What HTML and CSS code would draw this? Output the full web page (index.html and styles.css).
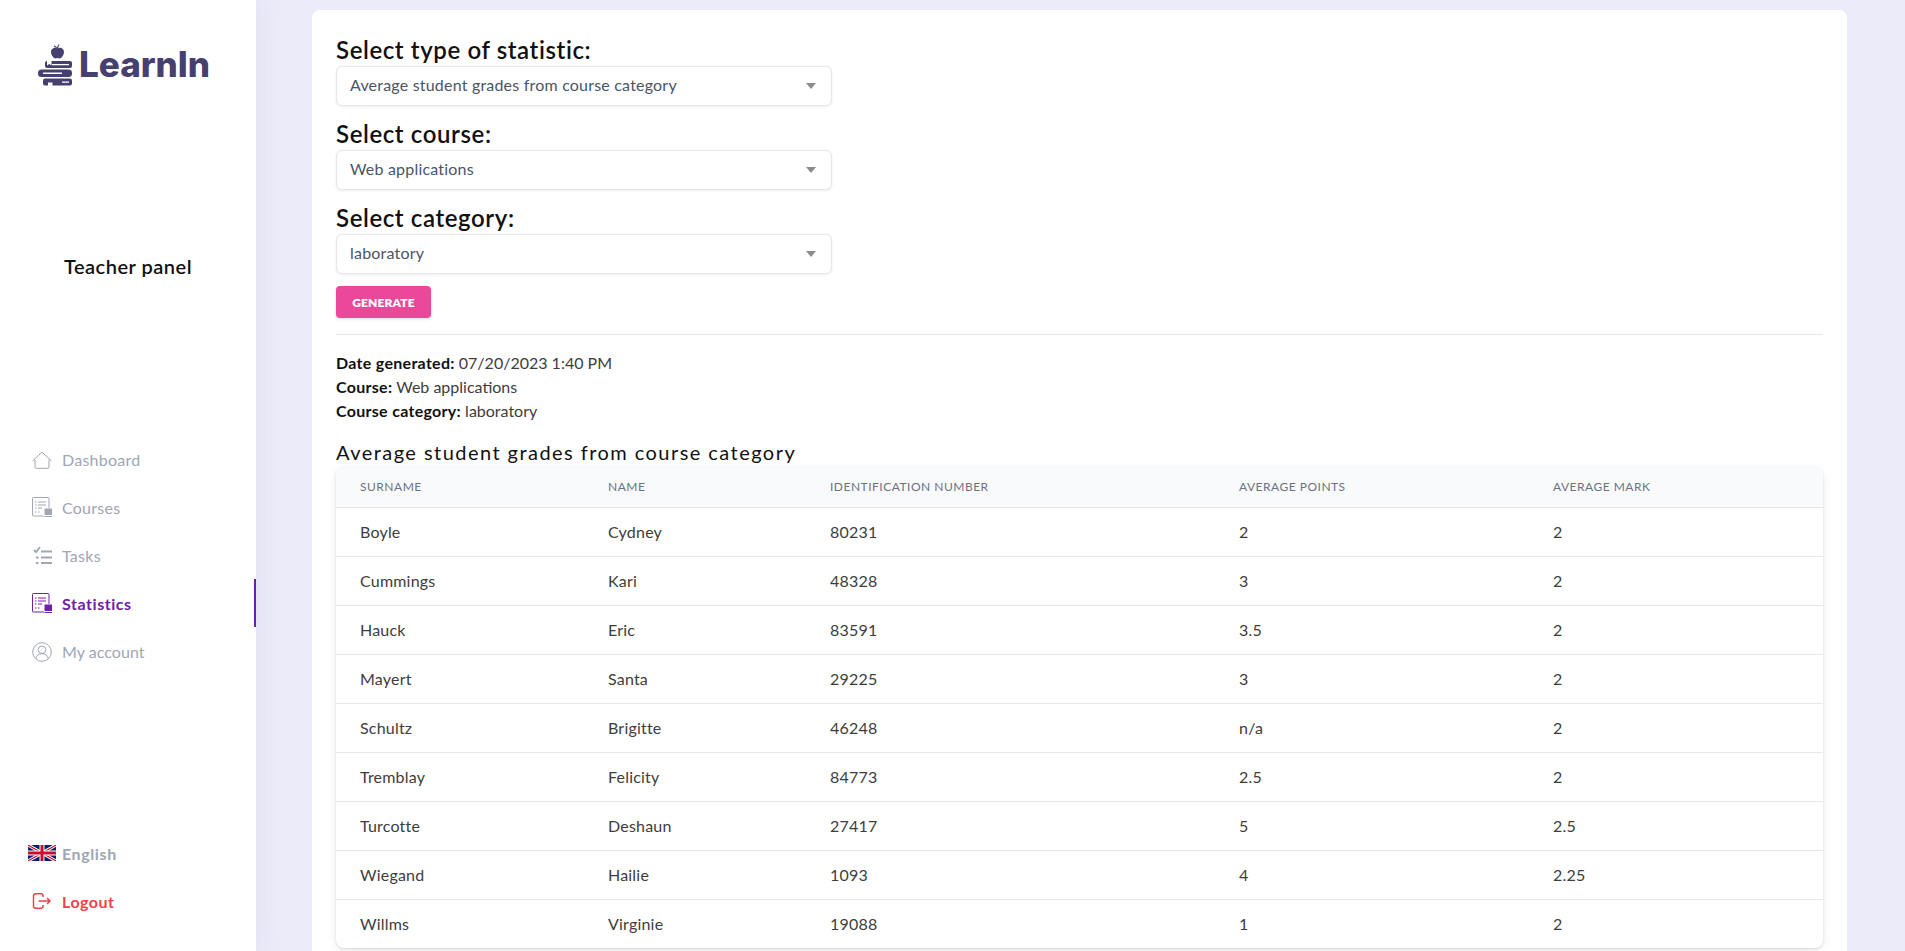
FILE: index.html
```html
<!DOCTYPE html>
<html lang="en">
<head>
<meta charset="utf-8">
<title>LearnIn - Statistics</title>
<link rel="stylesheet" href="styles.css">
</head>
<body>
<div class="app">
  <aside class="sidebar">
    <div class="logo">
      <svg class="logo-mark" viewBox="0 0 34 43" aria-hidden="true">
        <path fill="#45406f" d="M19.500 4.500c-1.300-.8-3-.9-4.300-.2-2 1-2.600 3.200-2 5.200.5 2 1.900 4.700 4 4.900 1 .1 1.600-.4 2.300-.4s1.300.5 2.300.4c2.100-.2 3.500-2.900 4-4.900.6-2-.1-4.200-2-5.200-1.300-.7-3-.6-4.300.2z"/>
        <path fill="none" stroke="#45406f" stroke-width="1.200" d="M19.500 5c0-1.500.4-3 1.600-4.500M19 4.500c-.7-1.300-1.700-2.300-3-2.800"/>
        <rect fill="#45406f" x="7" y="17" width="27" height="7" rx="2"/>
        <rect fill="#45406f" x="0" y="25.500" width="34" height="7.500" rx="3.500"/>
        <rect fill="#45406f" x="5" y="34.500" width="29" height="7" rx="2"/>
        <path fill="#fff" d="M14 20h17v1.300H14zM5 28.600h19v1.300H5zM24 37.500h7v1.300h-7zM9 16.500h4.500v5l-2.200-1.400L9 21.500zM10 38.500h4.500V43l-2.200-1.300L10 43z"/>
      </svg>
      <span class="logo-text">LearnIn</span>
    </div>
    <div class="panel-title">Teacher panel</div>
    <nav class="nav">
      <a class="nav-item"><svg class="icon" viewBox="0 0 20 20" aria-hidden="true"><path class="ln" d="M.5 12 10 3.200l9.500 8.800M3 10.500v7.500a1.300 1.300 0 0 0 1.300 1.300h11.400A1.300 1.300 0 0 0 17 18v-7.500"/></svg>Dashboard</a>
      <a class="nav-item"><svg class="icon" viewBox="0 0 20 20" aria-hidden="true"><path class="ln" d="M12 19H1.300a.8.8 0 0 1-.8-.8V1.300a.8.8 0 0 1 .8-.8h14.900a.8.8 0 0 1 .8.8V11"/><path class="ln" d="M6 5h8M6 8h8M6 11h4M3 5h1.500M3 8h1.500M3 11h1.500M3 15h1.500M6 15h1.500"/><path class="fl" d="M12.500 11.500H20V18h-7.500z"/><path class="ln" d="M12.500 19.500H20"/></svg>Courses</a>
      <a class="nav-item"><svg class="icon" viewBox="0 0 20 20" aria-hidden="true"><path class="ln bold" d="m2 5 2 2 4-5M9 6.500h11M9 12.500h11M9 18h11"/><path class="ln bold" d="M4 12.500h2.500M4 18h2.500"/></svg>Tasks</a>
      <a class="nav-item active"><svg class="icon" viewBox="0 0 20 20" aria-hidden="true"><path class="ln" d="M12 19H1.300a.8.8 0 0 1-.8-.8V1.300a.8.8 0 0 1 .8-.8h14.900a.8.8 0 0 1 .8.8V11"/><path class="ln" d="M6 5h8M6 8h8M6 11h4M3 5h1.500M3 8h1.500M3 11h1.500M3 15h1.500M6 15h1.500"/><path class="fl" d="M12.500 11.500H20V18h-7.500z"/><path class="ln" d="M12.500 19.500H20"/></svg>Statistics</a>
      <a class="nav-item account"><svg class="icon icon-low" viewBox="0 0 20 20" aria-hidden="true"><circle class="ln" cx="10" cy="10" r="9.300"/><circle class="ln" cx="10" cy="7.800" r="3.800"/><path class="ln" d="M3.800 16.500c.6-3 3-4.800 6.200-4.800s5.600 1.800 6.200 4.800"/></svg>My account</a>
    </nav>
    <div class="foot">
      <a class="nav-item lang"><svg class="flag" viewBox="0 0 28 16" aria-hidden="true"><rect width="28" height="16" fill="#012169"/><path d="M0 0 28 16M28 0 0 16" stroke="#fff" stroke-width="3.200"/><path d="M0 0 28 16M28 0 0 16" stroke="#c8102e" stroke-width="1.100"/><path d="M14 0v16M0 8h28" stroke="#fff" stroke-width="5"/><path d="M14 0v16M0 8h28" stroke="#c8102e" stroke-width="3"/></svg>English</a>
      <a class="nav-item logout"><svg class="icon" viewBox="0 0 20 20" aria-hidden="true"><path class="ln thick" d="M11 6V4.800a2 2 0 0 0-2-2H3.500a2 2 0 0 0-2 2v10.400a2 2 0 0 0 2 2H9a2 2 0 0 0 2-2V14M6.500 10h11.500M15 7l3 3-3 3"/></svg>Logout</a>
    </div>
  </aside>
  <main class="main">
    <section class="card">
      <div class="field">
        <label class="field-label">Select type of statistic:</label>
        <div class="select"><span>Average student grades from course category</span><i class="caret"></i></div>
      </div>
      <div class="field">
        <label class="field-label">Select course:</label>
        <div class="select"><span>Web applications</span><i class="caret"></i></div>
      </div>
      <div class="field">
        <label class="field-label">Select category:</label>
        <div class="select"><span>laboratory</span><i class="caret"></i></div>
      </div>
      <button class="btn">GENERATE</button>
      <hr class="rule">
      <div class="meta">
        <div><b>Date generated:</b> 07/20/2023 1:40 PM</div>
        <div><b>Course:</b> Web applications</div>
        <div><b>Course category:</b> laboratory</div>
      </div>
      <h2 class="report-title">Average student grades from course category</h2>
      <div class="table-wrap">
        <table class="grades">
          <colgroup><col class="c1"><col class="c2"><col class="c3"><col class="c4"><col class="c5"></colgroup>
          <thead><tr><th>Surname</th><th>Name</th><th>Identification number</th><th>Average points</th><th>Average mark</th></tr></thead>
          <tbody>
            <tr><td>Boyle</td><td>Cydney</td><td>80231</td><td>2</td><td>2</td></tr>
            <tr><td>Cummings</td><td>Kari</td><td>48328</td><td>3</td><td>2</td></tr>
            <tr><td>Hauck</td><td>Eric</td><td>83591</td><td>3.5</td><td>2</td></tr>
            <tr><td>Mayert</td><td>Santa</td><td>29225</td><td>3</td><td>2</td></tr>
            <tr><td>Schultz</td><td>Brigitte</td><td>46248</td><td>n/a</td><td>2</td></tr>
            <tr><td>Tremblay</td><td>Felicity</td><td>84773</td><td>2.5</td><td>2</td></tr>
            <tr><td>Turcotte</td><td>Deshaun</td><td>27417</td><td>5</td><td>2.5</td></tr>
            <tr><td>Wiegand</td><td>Hailie</td><td>1093</td><td>4</td><td>2.25</td></tr>
            <tr><td>Willms</td><td>Virginie</td><td>19088</td><td>1</td><td>2</td></tr>
          </tbody>
        </table>
      </div>
    </section>
  </main>
</div>
</body>
</html>
```
FILE: styles.css
```css
* { box-sizing: border-box; }
html, body { margin: 0; height: 100%; overflow: hidden; }
body { font-family: "Lato", "Open Sans", sans-serif; background: #ebebf9; color: #1a1a1a; }
.app { display: flex; height: 951px; }
.sidebar { width: 256px; flex: none; background: #fff; display: flex; flex-direction: column; box-shadow: 0 0 30px rgba(60,60,120,.08); position: relative; }
.logo { display: flex; align-items: center; padding: 40px 0 0 38px; gap: 7px; height: 88px; }
.logo-mark { width: 34px; height: 43px; flex: none; margin-top: 2px; }
.logo-text { font-family: "Inter", "Lato", sans-serif; font-size: 35px; line-height: 44px; font-weight: 800; letter-spacing: 0; color: #45406f; }
.panel-title { margin-top: 164px; text-align: center; font-size: 20px; line-height: 28px; font-weight: 600; letter-spacing: .5px; color: #111; }
.nav { margin-top: 155px; display: flex; flex-direction: column; }
.nav-item { display: flex; align-items: center; height: 48px; padding-left: 32px; gap: 10px; font-size: 16px; letter-spacing: .25px; color: #a0a6b4; position: relative; }
.nav-item.account { letter-spacing: .05px; }
.nav-item.active { color: #6b21a8; font-weight: 700; letter-spacing: .55px; }
.nav-item.active::after { content: ""; position: absolute; right: 0; top: 0; bottom: 0; width: 2px; background: #6b21a8; }
.icon { width: 20px; height: 20px; flex: none; }
.icon-low { margin-top: 2px; }
.ln { fill: none; stroke: currentColor; stroke-width: 1; }
.ln.bold { stroke-width: 1.900; }
.ln.thick { stroke-width: 1.500; }
.fl { fill: currentColor; }
.foot { margin-top: auto; padding-bottom: 26px; display: flex; flex-direction: column; }
.lang { padding-left: 28px; gap: 6px; font-weight: 700; letter-spacing: .6px; }
.flag { width: 28px; height: 16px; flex: none; }
.logout { color: #f0424a; font-weight: 700; letter-spacing: .5px; }
.main { flex: 1; min-width: 0; padding: 10px 58px 0 56px; }
.card { background: #fff; border-radius: 8px 8px 0 0; padding: 24px 24px 0; height: 941px; }
.field { margin-bottom: 12px; }
.field-label { display: block; font-size: 24px; line-height: 32px; font-weight: 600; letter-spacing: .6px; color: #111; }
.select { width: 496px; height: 40px; border: 1px solid #e4e7ec; border-radius: 6px; box-shadow: 0 1px 3px rgba(0,0,0,.08); padding: 0 13px 4px; display: flex; align-items: center; justify-content: space-between; font-size: 16px; letter-spacing: .2px; color: #4a5568; background: #fff; }
.caret { width: 0; height: 0; border-left: 5px solid transparent; border-right: 5px solid transparent; border-top: 6px solid #8c8c8c; margin: 4px 2px 0 0; }
.btn { display: block; width: 95px; height: 32px; background: #ec4899; color: #fff; border: 0; border-radius: 4px; font: 800 12px "Lato", sans-serif; letter-spacing: .1px; box-shadow: 0 1px 3px rgba(0,0,0,.15); }
.rule { margin: 16px 0 0; border: 0; border-top: 1px solid #e5e7eb; }
.meta { margin-top: 16px; font-size: 16px; line-height: 24px; color: #3d3d3d; }
.meta b { color: #111; font-weight: 700; letter-spacing: .3px; }
.report-title { margin: 15px 0 1px; font-size: 20px; line-height: 28px; font-weight: 400; letter-spacing: 1.45px; color: #111; }
.table-wrap { background: #fff; border-radius: 8px; box-shadow: 0 1px 3px rgba(0,0,0,.12), 0 4px 12px rgba(0,0,0,.06); overflow: hidden; }
.grades { width: 100%; border-collapse: collapse; table-layout: fixed; }
.c1 { width: 248px; } .c2 { width: 222px; } .c3 { width: 409px; } .c4 { width: 314px; } .c5 { width: auto; }
.grades th { height: 40px; background: #f9fafb; padding: 0 24px; text-align: left; font-size: 12px; font-weight: 400; letter-spacing: .5px; text-transform: uppercase; color: #6b7280; }
.grades td { height: 49px; padding: 0 24px; font-size: 16px; letter-spacing: .2px; color: #3d3d3d; border-top: 1px solid #e5e7eb; }
```
